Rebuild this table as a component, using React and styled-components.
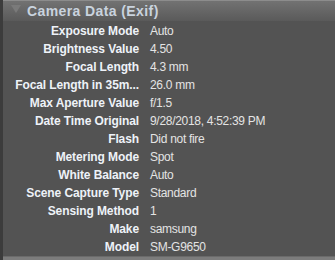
import React from 'react'
import styled, { createGlobalStyle } from 'styled-components'

const exif = [
  ['Exposure Mode', 'Auto'],
  ['Brightness Value', '4.50'],
  ['Focal Length', '4.3 mm'],
  ['Focal Length in 35m...', '26.0 mm'],
  ['Max Aperture Value', 'f/1.5'],
  ['Date Time Original', '9/28/2018, 4:52:39 PM'],
  ['Flash', 'Did not fire'],
  ['Metering Mode', 'Spot'],
  ['White Balance', 'Auto'],
  ['Scene Capture Type', 'Standard'],
  ['Sensing Method', '1'],
  ['Make', 'samsung'],
  ['Model', 'SM-G9650'],
]

export default function App() {
  return (
    <>
      <GlobalStyle />
      <Panel>
        <Header>
          <Caret viewBox="0 0 10 8">
            <path d="M0 0 H10 L5 8 Z" fill="#7a7a7a" />
          </Caret>
          <Title>Camera Data (Exif)</Title>
        </Header>
        <Body>
          {exif.map(([label, value]) => (
            <Row key={label}>
              <Label>{label}</Label>
              <Value>{value}</Value>
            </Row>
          ))}
        </Body>
        <Footer />
      </Panel>
    </>
  )
}

const GlobalStyle = createGlobalStyle`
  html, body {
    margin: 0;
    padding: 0;
    background: #535353;
  }
`

const Panel = styled.div`
  width: 335px;
  height: 260px;
  display: flex;
  flex-direction: column;
  background: #535353;
  border-left: 3px solid #3c3c3c;
  box-sizing: border-box;
  overflow: hidden;
  font-family: "Liberation Sans", Arial, sans-serif;
  font-size: 12px;
`

const Header = styled.div`
  height: 21px;
  flex: none;
  display: flex;
  align-items: center;
  gap: 6px;
  padding-left: 8px;
  border-top: 1px solid #8c8c8c;
  box-sizing: border-box;
  background: linear-gradient(#727272, #5a5a5a);
`

const Caret = styled.svg`
  width: 10px;
  height: 8px;
  margin-top: -4px;
`

const Title = styled.span`
  font-weight: bold;
  font-size: 14px;
  letter-spacing: 0.4px;
  color: #c9d3de;
`

const Body = styled.div`
  flex: 1;
  display: flex;
  flex-direction: column;
  padding-top: 1px;
`

const Row = styled.div`
  height: 18px;
  display: grid;
  grid-template-columns: 127px 1fr;
  column-gap: 11px;
  align-items: center;
  padding-left: 9px;
`

const Label = styled.span`
  font-weight: bold;
  color: #eef2f8;
  text-align: right;
  white-space: nowrap;
  letter-spacing: -0.1px;
`

const Value = styled.span`
  color: #e4e4e4;
  letter-spacing: -0.3px;
  white-space: nowrap;
`

const Footer = styled.div`
  height: 4px;
  flex: none;
  border-top: 1px solid #6a6a6a;
  background: #7c7c7c;
`
